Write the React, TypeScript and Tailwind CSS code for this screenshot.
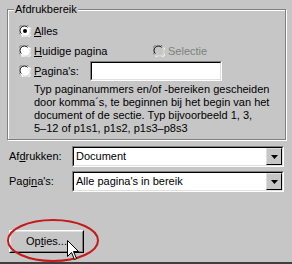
import React from 'react';

const font = { fontFamily: '"Liberation Sans", Arial, sans-serif' };

function Radio({ checked, disabled }: { checked?: boolean; disabled?: boolean }) {
  return (
    <svg width="12" height="12" viewBox="0 0 12 12" className="shrink-0">
      <circle cx="6" cy="6" r="5.5" fill={disabled ? '#c6c6c6' : '#ffffff'} />
      <path d="M1.1 9.5 A5.5 5.5 0 0 1 9.5 1.1" fill="none" stroke="#808080" strokeWidth="1" />
      <path d="M2.5 10.9 A5.5 5.5 0 0 0 10.9 2.5" fill="none" stroke="#ffffff" strokeWidth="1" />
      <path d="M2.3 8.6 A4 4 0 0 1 8.6 2.3" fill="none" stroke="#000000" strokeWidth="1" />
      <path d="M3.4 9.7 A4 4 0 0 0 9.7 3.4" fill="none" stroke="#dfdfdf" strokeWidth="1" />
      {checked && <circle cx="6" cy="6" r="2" fill="#000000" />}
    </svg>
  );
}

function Combo({ value }: { value: string }) {
  return (
    <div className="flex h-[21px] w-[212px] border-t border-l border-[#808080] border-r border-b border-r-white border-b-white">
      <div className="flex flex-1 border-t border-l border-black border-r border-b border-r-[#dfdfdf] border-b-[#dfdfdf] bg-white">
        <div className="flex-1 pl-[2px] leading-[17px]">{value}</div>
        <div className="flex w-[16px] items-center justify-center border-t border-l border-[#dfdfdf] border-r border-b border-r-black border-b-black bg-[#c6c6c6]">
          <svg width="7" height="4" viewBox="0 0 7 4">
            <path d="M0 0 H7 L3.5 4 Z" fill="#000000" />
          </svg>
        </div>
      </div>
    </div>
  );
}

export default function App() {
  return (
    <div
      className="relative h-[264px] w-[292px] overflow-hidden bg-[#c6c6c6] text-[11px] text-black border-b-2 border-b-[#404040]"
      style={font}
    >
      {/* Afdrukbereik group */}
      <div className="relative ml-[7px] mt-[9px] w-[279px] border border-[#808080] shadow-[inset_1px_1px_0_#ffffff,1px_1px_0_#ffffff] pl-[11px] pt-[11px] pb-[4px]">
        <div className="absolute left-[6px] top-[-7px] bg-[#c6c6c6] px-[1px] leading-[13px]">Afdrukbereik</div>

        <div className="flex h-[20px] items-center gap-[3px]">
          <Radio checked />
          <span><u>A</u>lles</span>
        </div>

        <div className="flex h-[20px] items-center">
          <div className="flex w-[134px] items-center gap-[3px]">
            <Radio />
            <span><u>H</u>uidige pagina</span>
          </div>
          <div className="flex items-center gap-[3px] text-[#808080]">
            <Radio disabled />
            <span>Selectie</span>
          </div>
        </div>

        <div className="flex h-[20px] items-center">
          <div className="flex w-[71px] items-center gap-[3px]">
            <Radio />
            <span><u>P</u>agina's:</span>
          </div>
          <div className="h-[20px] w-[132px] border-t border-l border-[#808080] border-r border-b border-r-white border-b-white">
            <div className="h-full border-t border-l border-black border-r border-b border-r-[#dfdfdf] border-b-[#dfdfdf] bg-white" />
          </div>
        </div>

        <p className="ml-[15px] mt-[2px] leading-[13px]">
          Typ paginanummers en/of -bereiken gescheiden
          <br />
          door komma´s, te beginnen bij het begin van het
          <br />
          document of de sectie. Typ bijvoorbeeld 1, 3,
          <br />
          5–12 of p1s1, p1s2, p1s3–p8s3
        </p>
      </div>

      {/* Afdrukken / Pagina's */}
      <div className="ml-[9px] mt-[6px] flex items-center">
        <span className="w-[63px]">Af<u>d</u>rukken:</span>
        <Combo value="Document" />
      </div>
      <div className="ml-[9px] mt-[4px] flex items-center">
        <span className="w-[63px]">Pagi<u>n</u>a's:</span>
        <Combo value="Alle pagina's in bereik" />
      </div>

      {/* Opties button */}
      <div className="ml-[9px] mt-[38px] h-[23px] w-[75px] border-t border-l border-white border-r border-b border-r-black border-b-black">
        <div className="flex h-full items-center justify-center border-t border-l border-[#dfdfdf] border-r border-b border-r-[#808080] border-b-[#808080]">
          <span>Op<u>t</u>ies...</span>
        </div>
      </div>

      {/* red highlight ellipse */}
      <svg className="absolute left-[6px] top-[218px]" width="94" height="45" viewBox="0 0 94 45">
        <ellipse cx="47" cy="22.5" rx="45" ry="20.5" fill="none" stroke="#c41a1a" strokeWidth="2" />
      </svg>

      {/* mouse pointer */}
      <svg className="absolute left-[67px] top-[240px]" width="13" height="21" viewBox="0 0 13 21">
        <path
          d="M0.5 0.5 V16.5 L4.5 12.5 L7.5 19.5 L9.5 18.5 L6.5 11.5 H11.5 Z"
          fill="#ffffff"
          stroke="#000000"
          strokeWidth="1"
          strokeLinejoin="miter"
        />
      </svg>
    </div>
  );
}
